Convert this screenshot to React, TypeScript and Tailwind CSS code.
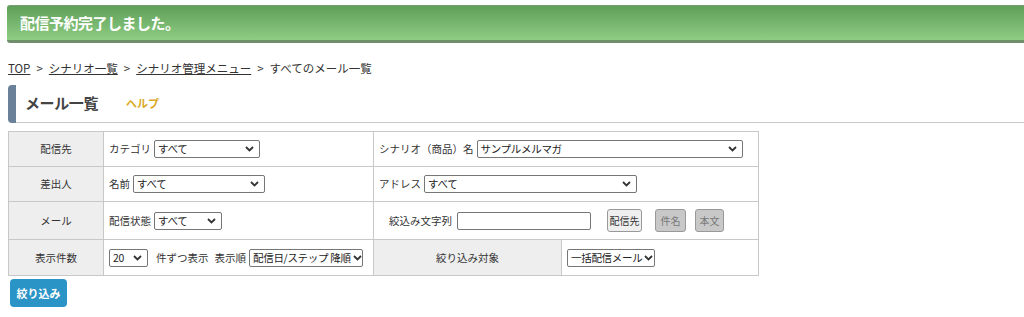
import React from 'react'

const font = { fontFamily: '"Noto Sans CJK JP", "Noto Sans", sans-serif' }

function Chevron() {
  return (
    <svg width="9" height="6" viewBox="0 0 9 6" className="shrink-0">
      <path d="M1 1l3.5 3.5L8 1" fill="none" stroke="#333" strokeWidth="1.8" />
    </svg>
  )
}

function Select({ value, width }: { value: string; width: string }) {
  return (
    <span
      className={`inline-flex h-[18px] items-center justify-between gap-[2px] overflow-hidden rounded-[2px] border border-[#767676] bg-white pl-[3px] pr-[5px] text-[10.5px] leading-[16px] tracking-[-0.3px] text-[#222] ${width}`}
    >
      <span className="whitespace-pre">{value}</span>
      <Chevron />
    </span>
  )
}

function SmallButton({ label, active, width }: { label: string; active?: boolean; width: string }) {
  return (
    <span
      className={`inline-flex h-[23px] items-center justify-center rounded-[3px] border text-[10px] leading-[16px] ${width} ${
        active ? 'border-[#999] bg-[#efefef] text-[#333]' : 'border-[#999] bg-[#c8c8c8] text-[#777]'
      }`}
    >
      {label}
    </span>
  )
}

function Sep() {
  return <span className="mx-[6px]">&gt;</span>
}

export default function App() {
  return (
    <div className="h-[317px] w-[1024px] overflow-hidden bg-white text-[#333]" style={font}>
      {/* Notice */}
      <div className="pl-[7px] pt-[5px]">
        <div className="flex h-[38px] items-center rounded-l-[3px] border-t border-b-[3px] border-t-[#7a9a76] border-b-[#6f8f6b] bg-gradient-to-b from-[#5f9f58] to-[#8fcd84] pl-[13px] text-[15px] font-bold tracking-[-0.5px] text-white">
          配信予約完了しました。
        </div>
      </div>

      {/* Breadcrumb */}
      <div className="mt-[17px] pl-[8px] text-[11.5px] leading-[16px] text-[#333]">
        <span className="underline">TOP</span>
        <Sep />
        <span className="underline">シナリオ一覧</span>
        <Sep />
        <span className="underline">シナリオ管理メニュー</span>
        <Sep />
        <span>すべてのメール一覧</span>
      </div>

      {/* Heading */}
      <div className="mt-[9px] flex h-[38px] items-stretch pl-[8px]">
        <div className="w-[8px] rounded-l-[4px] bg-[#6a8199]" />
        <div className="flex flex-1 items-center gap-[28px] border-b border-[#c8c8c8] pl-[9px]">
          <span className="text-[15px] font-bold tracking-[-0.4px] text-[#444]">メール一覧</span>
          <span className="text-[11px] font-bold text-[#d9a81f]">ヘルプ</span>
        </div>
      </div>

      {/* Filter table */}
      <div className="mt-[8px] ml-[8px] w-[751px] border border-[#c8c8c8] text-[10.5px] text-[#333]">
        <div className="grid h-[35px] grid-cols-[95px_270px_1fr] border-b border-[#c8c8c8]">
          <div className="flex items-center justify-center border-r border-[#c8c8c8] bg-[#eeeeee]">配信先</div>
          <div className="flex items-center gap-[3px] border-r border-[#c8c8c8] pl-[5px]">
            <span>カテゴリ</span>
            <Select value="すべて" width="w-[106px]" />
          </div>
          <div className="flex items-center gap-[3px] pl-[5px]">
            <span>シナリオ（商品）名</span>
            <Select value="サンプルメルマガ" width="w-[266px]" />
          </div>
        </div>
        <div className="grid h-[35px] grid-cols-[95px_270px_1fr] border-b border-[#c8c8c8]">
          <div className="flex items-center justify-center border-r border-[#c8c8c8] bg-[#eeeeee]">差出人</div>
          <div className="flex items-center gap-[3px] border-r border-[#c8c8c8] pl-[5px]">
            <span>名前</span>
            <Select value="すべて" width="w-[132px]" />
          </div>
          <div className="flex items-center gap-[3px] pl-[5px]">
            <span>アドレス</span>
            <Select value="すべて" width="w-[213px]" />
          </div>
        </div>
        <div className="grid h-[38px] grid-cols-[95px_270px_1fr] border-b border-[#c8c8c8]">
          <div className="flex items-center justify-center border-r border-[#c8c8c8] bg-[#eeeeee]">メール</div>
          <div className="flex items-center gap-[3px] border-r border-[#c8c8c8] pl-[5px]">
            <span>配信状態</span>
            <Select value="すべて" width="w-[68px]" />
          </div>
          <div className="flex items-center pl-[15px]">
            <span>絞込み文字列</span>
            <span className="ml-[5px] h-[18px] w-[134px] rounded-[2px] border border-[#767676] bg-white" />
            <span className="ml-[16px]">
              <SmallButton label="配信先" active width="w-[35px]" />
            </span>
            <span className="ml-[13px]">
              <SmallButton label="件名" width="w-[31px]" />
            </span>
            <span className="ml-[9px]">
              <SmallButton label="本文" width="w-[29px]" />
            </span>
          </div>
        </div>
        <div className="grid h-[35px] grid-cols-[95px_270px_188px_1fr]">
          <div className="flex items-center justify-center border-r border-[#c8c8c8] bg-[#eeeeee]">表示件数</div>
          <div className="flex items-center border-r border-[#c8c8c8] pl-[5px]">
            <Select value="20" width="w-[39px]" />
            <span className="ml-[8px]">件ずつ表示</span>
            <span className="ml-[6px]">表示順</span>
            <span className="ml-[3px]">
              <Select value="配信日/ステップ 降順" width="w-[114px]" />
            </span>
          </div>
          <div className="flex items-center justify-center border-r border-[#c8c8c8] bg-[#eeeeee]">絞り込み対象</div>
          <div className="flex items-center pl-[5px]">
            <Select value="一括配信メール" width="w-[88px]" />
          </div>
        </div>
      </div>

      <div className="mt-[3px] pl-[10px]">
        <span className="inline-flex h-[28px] w-[57px] items-center justify-center rounded-[4px] bg-[#2b94c6] text-[11px] font-bold text-white">
          絞り込み
        </span>
      </div>
    </div>
  )
}
